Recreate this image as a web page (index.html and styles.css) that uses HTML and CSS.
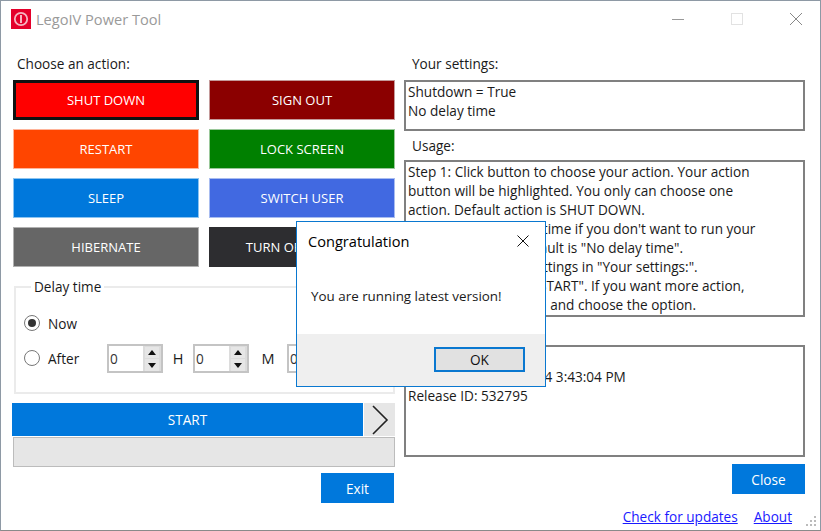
FILE: index.html
```html
<!DOCTYPE html>
<html lang="en">
<head>
<meta charset="utf-8">
<title>LegoIV Power Tool</title>
<link rel="stylesheet" href="styles.css">
</head>
<body>
<div class="window">
  <header class="titlebar">
    <svg class="app-icon" width="20" height="20" viewBox="0 0 20 20"><rect width="20" height="20" fill="#e4002b"/><circle cx="10" cy="10" r="6.2" fill="none" stroke="#f6b5c2" stroke-width="1.8"/><rect x="9.2" y="6" width="1.6" height="8" fill="#fbe0e6"/></svg>
    <span class="app-title">LegoIV Power Tool</span>
    <div class="win-controls">
      <svg width="14" height="14" viewBox="0 0 14 14"><path d="M1 7.5H13" stroke="#999" fill="none"/></svg>
      <svg width="14" height="14" viewBox="0 0 14 14"><rect x="1.5" y="1.5" width="11" height="11" fill="none" stroke="#e2e2e2"/></svg>
      <svg width="14" height="14" viewBox="0 0 14 14"><path d="M1 1L13 13M13 1L1 13" stroke="#888" fill="none"/></svg>
    </div>
  </header>
  <main class="content">
    <section class="left">
      <div class="label">Choose an action:</div>
      <div class="actions">
        <button class="action red selected">SHUT DOWN</button>
        <button class="action maroon">SIGN OUT</button>
        <button class="action orange">RESTART</button>
        <button class="action green">LOCK SCREEN</button>
        <button class="action blue">SLEEP</button>
        <button class="action royal">SWITCH USER</button>
        <button class="action gray">HIBERNATE</button>
        <button class="action dark">TURN OFF SCREEN</button>
      </div>
      <fieldset class="delay">
        <legend>Delay time</legend>
        <div class="delay-row now"><span class="radio checked"></span><span>Now</span></div>
        <div class="delay-row after">
          <span class="radio"></span><span class="after-label">After</span>
          <span class="spinner"><span class="spin-value">0</span><span class="spin-btns"><span class="spin-btn"><i class="tri up"></i></span><span class="spin-btn"><i class="tri down"></i></span></span></span>
          <span class="unit">H</span>
          <span class="spinner"><span class="spin-value">0</span><span class="spin-btns"><span class="spin-btn"><i class="tri up"></i></span><span class="spin-btn"><i class="tri down"></i></span></span></span>
          <span class="unit unit-m">M</span>
          <span class="spinner"><span class="spin-value">0</span><span class="spin-btns"><span class="spin-btn"><i class="tri up"></i></span><span class="spin-btn"><i class="tri down"></i></span></span></span>
        </div>
      </fieldset>
      <div class="start-row">
        <button class="start">START</button>
        <button class="more"><svg width="18" height="32" viewBox="0 0 18 32"><path d="M2 2L16 16L2 30" fill="none" stroke="#222" stroke-width="1.6"/></svg></button>
      </div>
      <div class="progress"></div>
      <div class="exit-row"><button class="flat">Exit</button></div>
    </section>
    <section class="right">
      <div class="label">Your settings:</div>
      <div class="box settings">Shutdown = True<br>No delay time</div>
      <div class="label usage-label">Usage:</div>
      <div class="box usage">Step 1: Click button to choose your action. Your action<br>button will be highlighted. You only can choose one<br>action. Default action is SHUT DOWN.<br>Step 2: Choose delay time if you don't want to run your<br>action right now. Default is "No delay time".<br>Step 3: Check your settings in "Your settings:".<br>Step 4: Click button "START". If you want more action,<br>click the arrow button and choose the option.</div>
      <div class="box version">Version: 1.0<br>Release date: 3/2/2014 3:43:04 PM<br>Release ID: 532795</div>
      <div class="close-row"><button class="flat">Close</button></div>
      <div class="links"><a href="#">Check for updates</a><a href="#">About</a></div>
    </section>
  </main>
  <svg class="grip" width="12" height="12" viewBox="0 0 12 12"><path d="M9 1h2v2H9zM5 5h2v2H5zM9 5h2v2H9zM1 9h2v2H1zM5 9h2v2H5zM9 9h2v2H9z" fill="#bbb"/></svg>
  <div class="dialog">
    <div class="dialog-head">
      <span>Congratulation</span>
      <svg width="12" height="12" viewBox="0 0 12 12"><path d="M0.5 0.5L11.5 11.5M11.5 0.5L0.5 11.5" stroke="#111" fill="none"/></svg>
    </div>
    <div class="dialog-msg">You are running latest version!</div>
    <div class="dialog-foot"><button class="ok">OK</button></div>
  </div>
</div>
</body>
</html>
```
FILE: styles.css
```css
* { box-sizing: border-box; }
html, body { margin: 0; padding: 0; }
body { width: 821px; height: 531px; overflow: hidden; background: #fff; font-family: "Open Sans", "Noto Sans", sans-serif; font-size: 13.6px; color: #1a1a1a; }
button { font-family: inherit; font-size: inherit; border: 0; padding: 0; margin: 0; }

.window { position: relative; width: 821px; height: 531px; border: 1px solid #8e99a5; border-bottom-color: #8a8a8a; background: #fff; overflow: hidden; }

.titlebar { display: flex; align-items: center; height: 40px; padding: 0 17px 4px 10px; }
.app-icon { flex: none; }
.app-title { margin-left: 5px; font-size: 14.6px; color: #9a9a9a; }
.win-controls { margin-left: auto; display: flex; gap: 45px; }

.content { display: flex; padding-left: 11px; }
.left { width: 384px; }
.right { width: 401px; margin-left: 8px; }

.label { height: 20px; line-height: 20px; margin-top: 13px; margin-bottom: 6px; padding-left: 5px; }
.right .label { padding-left: 8px; }
.usage-label { margin-top: 5px; margin-bottom: 4px; }
.right .usage-label { margin-top: 5px; }

.actions { display: grid; grid-template-columns: 186px 186px; column-gap: 10px; row-gap: 8.7px; margin-left: 1px; }
.action { height: 40.3px; color: #fff; font-size: 13px; border: 1px solid transparent; }
.red { background: #ff0000; }
.selected { border: 3px solid #111; }
.maroon { background: #8b0000; border-color: #c49a9a; }
.orange { background: #ff4500; border-color: #ffb49a; }
.green { background: #008000; border-color: #9ac89a; }
.blue { background: #0078dc; border-color: #8cc4f0; }
.royal { background: #4169e1; border-color: #a8bcf0; }
.gray { background: #666; border-color: #b0b0b0; }
.dark { background: #2d2d30; }

.delay { margin: 10px 0 0 2px; width: 381px; height: 117px; padding: 0 8px; border: 2px solid #ebebeb; }
.delay legend { padding: 0 3px; margin-left: 7px; line-height: 20px; }
.delay-row { display: flex; align-items: center; padding-left: 0; }
.now { margin-top: 16px; height: 20px; }
.after { margin-top: 10px; height: 30px; }
.radio { flex: none; width: 16px; height: 16px; margin-left: 0; margin-right: 8px; border: 1.5px solid #777; border-radius: 50%; background: #fff; display: flex; align-items: center; justify-content: center; }
.checked::after { content: ""; width: 8px; height: 8px; border-radius: 50%; background: #333; }
.after-label { width: 59px; }
.spinner { flex: none; display: flex; width: 56px; height: 29px; border: 2px solid #c4c4c4; background: #fff; }
.spin-value { flex: 1; line-height: 25px; padding-left: 1px; color: #333; }
.spin-btns { display: flex; flex-direction: column; width: 18px; background: #dcdcdc; padding: 1px 2px 0 2px; gap: 1px; }
.spin-btn { flex: 1; display: flex; align-items: center; justify-content: center; background: #e6e6e6; }
.tri { display: block; width: 0; height: 0; border-left: 4px solid transparent; border-right: 4px solid transparent; }
.tri.up { border-bottom: 5px solid #111; }
.tri.down { border-top: 5px solid #111; }
.unit { width: 30px; text-align: center; font-size: 14.5px; }
.unit-m { width: 38px; }

.start-row { display: flex; margin-top: 9px; }
.start { width: 351px; height: 33px; background: #0078dc; color: #fff; font-size: 13.6px; }
.more { width: 31px; height: 33px; margin-left: 1px; background: #e6e6e6; display: flex; align-items: center; justify-content: center; }
.progress { margin: 1px 0 0 1px; width: 382px; height: 30px; background: #e6e6e6; border: 1px solid #bcbcbc; }
.exit-row { display: flex; justify-content: flex-end; margin-top: 6px; padding-right: 2px; }
.flat { width: 73px; height: 30px; background: #0078dc; color: #fff; font-size: 13.6px; }

.box { border: 2px solid #808080; padding: 0 2px; line-height: 19px; background: #fff; overflow: hidden; white-space: nowrap; }
.settings { height: 51px; }
.usage { height: 157px; padding-top: 0; }
.version { height: 112px; margin-top: 28px; padding-top: 1px; }
.close-row { display: flex; justify-content: flex-end; margin-top: 7px; }
.links { display: flex; justify-content: flex-end; gap: 16px; margin-top: 13px; padding-right: 13px; line-height: 20px; }
.links a { color: #1a1aff; text-decoration: underline; }

.grip { position: absolute; right: 3px; bottom: 3px; }

.dialog { position: absolute; left: 295px; top: 220px; width: 250px; height: 166px; border: 1px solid #0a78d0; background: #fff; display: flex; flex-direction: column; }
.dialog-head { display: flex; align-items: center; justify-content: space-between; height: 38px; padding: 0 16px 0 11px; font-size: 14.6px; color: #000; }
.dialog-msg { height: 74px; padding: 26px 0 0 14px; line-height: 20px; font-size: 13.4px; }
.dialog-foot { flex: 1; display: flex; justify-content: flex-end; align-items: flex-start; padding: 13px 20px 0 0; background: #efefef; }
.ok { width: 91px; height: 25px; background: #e1e1e1; border: 2px solid #0a78d0; color: #111; font-size: 13.6px; }
```
